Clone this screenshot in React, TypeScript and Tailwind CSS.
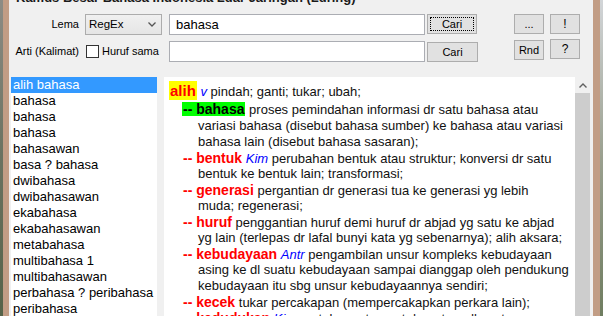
import React from 'react';

const listItems = [
  'alih bahasa',
  'bahasa',
  'bahasa',
  'bahasa',
  'bahasawan',
  'basa ? bahasa',
  'dwibahasa',
  'dwibahasawan',
  'ekabahasa',
  'ekabahasawan',
  'metabahasa',
  'multibahasa 1',
  'multibahasawan',
  'perbahasa ? peribahasa',
  'peribahasa',
];

const WinButton: React.FC<{ children: React.ReactNode; className?: string; focused?: boolean }> = ({
  children,
  className = '',
  focused = false,
}) => (
  <button
    className={`flex h-[20px] items-center justify-center border border-[#adadad] bg-[#e1e1e1] p-[2px] text-[11px] leading-none text-black ${className}`}
  >
    {focused ? (
      <span className="flex h-full w-full items-center justify-center border border-dotted border-black">
        {children}
      </span>
    ) : (
      children
    )}
  </button>
);

const Head: React.FC<{ children: React.ReactNode }> = ({ children }) => (
  <span className="text-[14px] font-bold text-[#ff0000]">{children}</span>
);

const Tag: React.FC<{ children: React.ReactNode }> = ({ children }) => (
  <i className="text-[#0000ff]">{children}</i>
);

const Line: React.FC<{ children: React.ReactNode; indent?: 'head' | 'cont' }> = ({ children, indent = 'head' }) => (
  <div className={`h-[16px] whitespace-nowrap leading-[16px] ${indent === 'head' ? 'pl-[14px]' : 'pl-[29px]'}`}>
    {children}
  </div>
);

const App: React.FC = () => {
  return (
    <div className="flex h-[316px] w-[603px] overflow-hidden font-['Liberation_Sans',Arial,sans-serif]">
      <div className="w-[3px] bg-gradient-to-b from-[#8d8c85] via-[#6a7260] to-[#566349]" />
      <div className="w-[6px] bg-[#c29d85]" />

      <div className="flex w-[584px] flex-col bg-[#f0f0f0]">
        {/* title, mostly cut off at the top */}
        <div className="-mt-[9px] h-[14px] whitespace-nowrap pl-[7px] text-[13px] font-bold leading-[14px] text-[#1a1a1a]">
          Kamus Besar Bahasa Indonesia Luar Jaringan (Luring)
        </div>

        {/* search form */}
        <div className="mt-[9px] flex">
          <div className="flex flex-col gap-[6px]">
            <div className="flex h-[21px] items-center">
              <span className="w-[70px] text-right text-[11px] text-black">Lema</span>
              <div className="ml-[6px] flex h-[21px] w-[77px] items-center justify-between border border-[#acacac] bg-gradient-to-b from-[#f0f0f0] to-[#e5e5e5] pl-[3px] pr-[5px] text-[11.5px] text-black">
                <span>RegEx</span>
                <svg width="8" height="5" viewBox="0 0 8 5" fill="none">
                  <path d="M0.5 0.5L4 4L7.5 0.5" stroke="#555" strokeWidth="1.3" />
                </svg>
              </div>
              <div className="ml-[7px] flex h-[21px] w-[256px] items-center border border-[#abadb3] bg-white pl-[6px] text-[13px] text-black">
                bahasa
              </div>
              <WinButton focused className="ml-[2px] w-[50px] self-start">
                Cari
              </WinButton>
            </div>

            <div className="flex h-[21px] items-center">
              <span className="w-[70px] text-right text-[11px] text-black">Arti (Kalimat)</span>
              <div className="ml-[6px] flex w-[77px] items-center">
                <span className="ml-[1px] h-[13px] w-[13px] border border-[#333] bg-white" />
                <span className="ml-[3px] text-[11px] text-black">Huruf sama</span>
              </div>
              <div className="ml-[7px] h-[21px] w-[256px] border border-[#abadb3] bg-white" />
              <WinButton className="ml-[2px] mt-[1px] w-[51px]">Cari</WinButton>
            </div>
          </div>

          <div className="ml-[36px] grid grid-cols-[30px_30px] gap-x-[6px] gap-y-[4px]">
            <WinButton className="w-[30px]">...</WinButton>
            <WinButton className="w-[30px] text-[12px]">!</WinButton>
            <WinButton className="w-[30px]">Rnd</WinButton>
            <WinButton className="-mt-[1px] w-[30px] text-[12px]">?</WinButton>
          </div>
        </div>

        {/* results */}
        <div className="mt-[15px] flex min-h-0 flex-1">
          <div className="ml-[2px] w-[146px] bg-white text-[13px] text-black">
            {listItems.map((item, i) => (
              <div
                key={i}
                className={`h-[16px] whitespace-nowrap pl-[2px] leading-[16px] ${i === 0 ? 'bg-[#3399ff] text-white' : ''}`}
              >
                {item}
              </div>
            ))}
          </div>

          <div className="ml-[7px] w-[411px] overflow-hidden bg-white pl-[5px] pt-[4px] text-[13px] text-[#111]">
            <div className="h-[20px] whitespace-nowrap leading-[20px]">
              <span className="inline-block h-[19px] bg-[#ffff00] px-[1px] text-[15px] font-bold leading-[19px] text-[#ff0000]">
                alih
              </span>{' '}
              <Tag>v</Tag> pindah; ganti; tukar; ubah;
            </div>
            <div className="h-[17px] whitespace-nowrap pl-[13px] leading-[17px]">
              <span className="inline-block bg-[#00ff00] px-[1px] text-[14px] font-bold leading-[14px] text-black">
                -- bahasa
              </span>{' '}
              proses pemindahan informasi dr satu bahasa atau
            </div>
            <Line indent="cont">variasi bahasa (disebut bahasa sumber) ke bahasa atau variasi</Line>
            <Line indent="cont">bahasa lain (disebut bahasa sasaran);</Line>
            <Line>
              <Head>-- bentuk</Head> <Tag>Kim</Tag> perubahan bentuk atau struktur; konversi dr satu
            </Line>
            <Line indent="cont">bentuk ke bentuk lain; transformasi;</Line>
            <Line>
              <Head>-- generasi</Head> pergantian dr generasi tua ke generasi yg lebih
            </Line>
            <Line indent="cont">muda; regenerasi;</Line>
            <Line>
              <Head>-- huruf</Head> penggantian huruf demi huruf dr abjad yg satu ke abjad
            </Line>
            <Line indent="cont">yg lain (terlepas dr lafal bunyi kata yg sebenarnya); alih aksara;</Line>
            <Line>
              <Head>-- kebudayaan</Head> <Tag>Antr</Tag> pengambilan unsur kompleks kebudayaan
            </Line>
            <Line indent="cont">asing ke dl suatu kebudayaan sampai dianggap oleh pendukung</Line>
            <Line indent="cont">kebudayaan itu sbg unsur kebudayaannya sendiri;</Line>
            <Line>
              <Head>-- kecek</Head> tukar percakapan (mempercakapkan perkara lain);
            </Line>
            <Line>
              <Head>-- kedudukan</Head> <Tag>Kim</Tag> pertukaran tempat dua atom dl suatu
            </Line>
          </div>

          <div className="flex w-[15px] flex-col">
            <div className="flex h-[16px] items-center justify-center bg-[#f0f0f0]">
              <svg width="8" height="5" viewBox="0 0 8 5" fill="none">
                <path d="M0.5 4.5L4 1L7.5 4.5" stroke="#606060" strokeWidth="1.4" />
              </svg>
            </div>
            <div className="flex-1 bg-[#cdcdcd]" />
          </div>
        </div>
      </div>

      <div className="w-[7px] bg-[#c29d85]" />
      <div className="w-[3px] bg-gradient-to-b from-[#d2d5d8] via-[#9aa08f] to-[#6f7d60]" />
    </div>
  );
};

export default App;
